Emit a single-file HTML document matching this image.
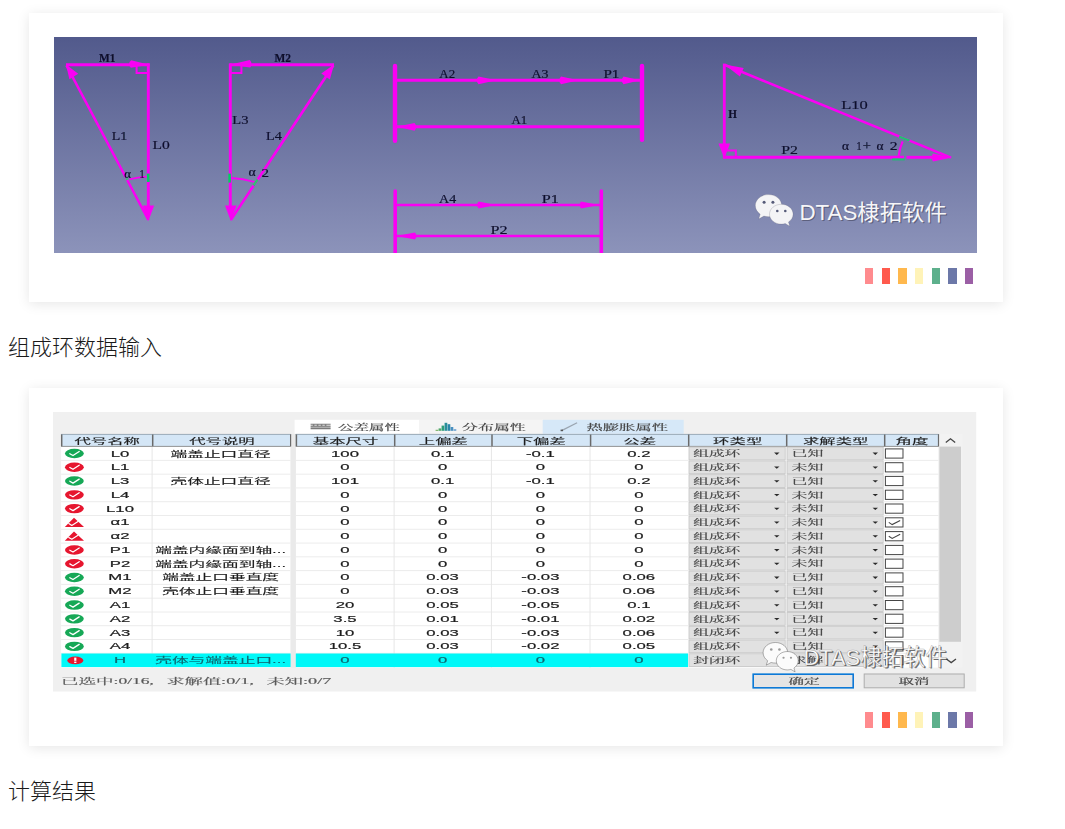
<!DOCTYPE html>
<html lang="zh-CN"><head><meta charset="utf-8"><title>组成环数据输入</title>
<style>
html,body{margin:0;padding:0;background:#fff;}
body{width:1065px;height:829px;position:relative;overflow:hidden;font-family:"Liberation Sans","Noto Sans CJK SC",sans-serif;}
.card{position:absolute;left:29px;width:974px;background:#fff;box-shadow:0 2px 12px rgba(0,0,0,.10);}
.bar{position:absolute;width:8.6px;height:16px;}
h2{position:absolute;left:8px;margin:0;font-weight:300;font-size:22px;line-height:30px;color:#1a1a1a;font-family:"Liberation Sans","Noto Sans CJK SC",sans-serif;white-space:nowrap;}
.img{position:absolute;overflow:hidden;}
</style></head><body>

<div class="card" style="top:13px;height:289px"></div>
<div class="card" style="top:388px;height:358px"></div>
<div class="bar" style="left:864.8px;top:268px;background:#ff8b8e"></div><div class="bar" style="left:881.5px;top:268px;background:#ff5a4d"></div><div class="bar" style="left:898.1px;top:268px;background:#ffb84d"></div><div class="bar" style="left:914.8px;top:268px;background:#fff3b8"></div><div class="bar" style="left:931.5px;top:268px;background:#5db08c"></div><div class="bar" style="left:948.1px;top:268px;background:#6c78a8"></div><div class="bar" style="left:964.8px;top:268px;background:#9b5fa5"></div>
<div class="bar" style="left:864.8px;top:712px;background:#ff8b8e"></div><div class="bar" style="left:881.5px;top:712px;background:#ff5a4d"></div><div class="bar" style="left:898.1px;top:712px;background:#ffb84d"></div><div class="bar" style="left:914.8px;top:712px;background:#fff3b8"></div><div class="bar" style="left:931.5px;top:712px;background:#5db08c"></div><div class="bar" style="left:948.1px;top:712px;background:#6c78a8"></div><div class="bar" style="left:964.8px;top:712px;background:#9b5fa5"></div>
<h2 style="top:333px">组成环数据输入</h2>
<h2 style="top:777px">计算结果</h2>
<svg class="img" style="left:54px;top:37px" width="923" height="216" viewBox="54 37 923 216">
<defs><linearGradient id="bg1" x1="0" y1="0" x2="0" y2="1"><stop offset="0" stop-color="#525a8c"/><stop offset="1" stop-color="#8c93ba"/></linearGradient><filter id="soft" x="-5%" y="-5%" width="110%" height="110%"><feGaussianBlur stdDeviation="0.55"/></filter></defs>
<rect x="54" y="37" width="923" height="216" fill="url(#bg1)"/>
<g filter="url(#soft)">
<line x1="66" y1="64.8" x2="149.6" y2="64.8" stroke="#fa04f4" stroke-width="2.9" stroke-linecap="butt"/>
<line x1="148.3" y1="63.5" x2="148.3" y2="208" stroke="#fa04f4" stroke-width="2.9" stroke-linecap="butt"/>
<line x1="66.5" y1="65.5" x2="148.4" y2="220" stroke="#fa04f4" stroke-width="2.6" stroke-linecap="butt"/>
<path d="M148.4 221.0 L142.6 205.6 Q148.4 205.6 154.2 205.6 Z" fill="#fa04f4"/>
<path d="M149.0 64.8 L130.8 67.8 Q127.0 63.8 131.2 60.2 Z" fill="#fa04f4"/>
<path d="M66.0 64.5 L78.2 73.7 Q73.8 76.5 69.4 79.3 Z" fill="#fa04f4"/>
<path d="M136.6 65 V73 H148" fill="none" stroke="#fa04f4" stroke-width="2"/>
<path d="M129.3 179.3 Q138 177.2 146.6 176.6" fill="none" stroke="#fa04f4" stroke-width="1.8"/>
<line x1="148.3" y1="173.6" x2="148.3" y2="182" stroke="#00d060" stroke-width="2.6" stroke-linecap="butt"/>
<line x1="126.0" y1="177.0" x2="127.4" y2="180.0" stroke="#30c070" stroke-width="2.2" stroke-linecap="butt"/>
<line x1="229.5" y1="64.8" x2="334" y2="64.8" stroke="#fa04f4" stroke-width="2.9" stroke-linecap="butt"/>
<line x1="230.3" y1="63.5" x2="230.3" y2="208" stroke="#fa04f4" stroke-width="2.9" stroke-linecap="butt"/>
<line x1="230.8" y1="220" x2="333.3" y2="65.5" stroke="#fa04f4" stroke-width="2.6" stroke-linecap="butt"/>
<path d="M230.8 221.0 L225.0 205.6 Q230.8 205.6 236.6 205.6 Z" fill="#fa04f4"/>
<path d="M230.0 64.8 L249.8 60.0 Q253.0 63.7 250.2 67.6 Z" fill="#fa04f4"/>
<path d="M334.0 64.5 L329.9 79.5 Q325.6 76.5 321.3 73.5 Z" fill="#fa04f4"/>
<path d="M231 73 H241.4 V65" fill="none" stroke="#fa04f4" stroke-width="2"/>
<path d="M231 178 Q243 178.4 254.6 182" fill="none" stroke="#fa04f4" stroke-width="1.8"/>
<line x1="229.6" y1="173.6" x2="229.6" y2="182.6" stroke="#00d060" stroke-width="2.6" stroke-linecap="butt"/>
<line x1="253.6" y1="185.5" x2="257.6" y2="179.5" stroke="#30c070" stroke-width="2.4" stroke-linecap="butt"/>
<line x1="395" y1="65.9" x2="395" y2="140.7" stroke="#fa04f4" stroke-width="4.4" stroke-linecap="round"/>
<line x1="642" y1="65.9" x2="642" y2="139.8" stroke="#fa04f4" stroke-width="4.4" stroke-linecap="round"/>
<line x1="395" y1="80.3" x2="642" y2="80.3" stroke="#fa04f4" stroke-width="2.9" stroke-linecap="butt"/>
<line x1="395" y1="126.8" x2="642" y2="126.8" stroke="#fa04f4" stroke-width="2.9" stroke-linecap="butt"/>
<path d="M496.0 80.3 L478.5 84.2 Q475.0 80.3 478.5 76.4 Z" fill="#fa04f4"/>
<path d="M578.4 80.3 L561.0 84.2 Q557.5 80.3 561.0 76.4 Z" fill="#fa04f4"/>
<path d="M640.0 80.3 L623.5 84.2 Q620.0 80.3 623.5 76.4 Z" fill="#fa04f4"/>
<path d="M397.0 126.8 L414.5 122.9 Q418.0 126.8 414.5 130.7 Z" fill="#fa04f4"/>
<line x1="395.2" y1="191" x2="395.2" y2="256" stroke="#fa04f4" stroke-width="3.6" stroke-linecap="round"/>
<line x1="601.3" y1="191" x2="601.3" y2="256" stroke="#fa04f4" stroke-width="3.6" stroke-linecap="round"/>
<line x1="395" y1="205" x2="601" y2="205" stroke="#fa04f4" stroke-width="2.4" stroke-linecap="butt"/>
<line x1="395" y1="236" x2="601" y2="236" stroke="#fa04f4" stroke-width="2.4" stroke-linecap="butt"/>
<path d="M496.0 205.0 L478.5 208.4 Q475.5 205.0 478.5 201.6 Z" fill="#fa04f4"/>
<path d="M599.0 205.0 L581.0 208.4 Q578.0 205.0 581.0 201.6 Z" fill="#fa04f4"/>
<path d="M396.5 236.0 L415.0 232.6 Q418.0 236.0 415.0 239.4 Z" fill="#fa04f4"/>
<line x1="724.3" y1="63.6" x2="724.3" y2="158.4" stroke="#fa04f4" stroke-width="2.8" stroke-linecap="butt"/>
<line x1="723" y1="157.3" x2="904" y2="157.3" stroke="#fa04f4" stroke-width="2.9" stroke-linecap="butt"/>
<line x1="906.5" y1="157.3" x2="935" y2="157.3" stroke="#fa04f4" stroke-width="2.9" stroke-linecap="butt"/>
<line x1="725" y1="65" x2="951" y2="157.6" stroke="#fa04f4" stroke-width="2.6" stroke-linecap="butt"/>
<path d="M724.3 158.5 L718.5 143.6 Q724.3 143.6 730.1 143.6 Z" fill="#fa04f4"/>
<path d="M724.5 64.6 L743.7 68.0 Q741.8 72.2 739.9 76.4 Z" fill="#fa04f4"/>
<path d="M952.0 157.5 L933.0 161.5 Q930.5 157.5 933.0 153.5 Z" fill="#fa04f4"/>
<path d="M725 150.6 H735.8 V157" fill="none" stroke="#fa04f4" stroke-width="2"/>
<path d="M902.6 141.4 Q899.4 149 898.6 156.6" fill="none" stroke="#fa04f4" stroke-width="2.2"/>
<line x1="899.2" y1="136.6" x2="909.6" y2="140.6" stroke="#20c070" stroke-width="2.2" stroke-linecap="butt"/>
<line x1="892.2" y1="159.4" x2="904.8" y2="159.4" stroke="#20c070" stroke-width="2.0" stroke-linecap="butt"/>
</g>
<g font-family="'Liberation Serif',serif" fill="#0d0e2c" stroke="#0d0e2c" stroke-width="0.18" filter="url(#soft)">
<text x="99" y="61.8" font-size="13" font-weight="bold" textLength="16.6" lengthAdjust="spacingAndGlyphs">M1</text>
<text x="111.8" y="139.8" font-size="13" font-weight="normal" textLength="15.5" lengthAdjust="spacingAndGlyphs">L1</text>
<text x="152.4" y="148.8" font-size="13" font-weight="normal" textLength="17.3" lengthAdjust="spacingAndGlyphs">L0</text>
<text x="274.4" y="61.8" font-size="13" font-weight="bold" textLength="16.5" lengthAdjust="spacingAndGlyphs">M2</text>
<text x="232.3" y="124.1" font-size="13" font-weight="normal" textLength="16.1" lengthAdjust="spacingAndGlyphs">L3</text>
<text x="266.1" y="140.2" font-size="13" font-weight="normal" textLength="15.8" lengthAdjust="spacingAndGlyphs">L4</text>
<text x="439.3" y="77.6" font-size="13" font-weight="normal" textLength="15.8" lengthAdjust="spacingAndGlyphs">A2</text>
<text x="511.5" y="124.4" font-size="13" font-weight="normal" textLength="15.7" lengthAdjust="spacingAndGlyphs">A1</text>
<text x="531.5" y="77.6" font-size="13" font-weight="normal" textLength="16.9" lengthAdjust="spacingAndGlyphs">A3</text>
<text x="603.4" y="77.6" font-size="13" font-weight="normal" textLength="16.0" lengthAdjust="spacingAndGlyphs">P1</text>
<text x="439.1" y="202.6" font-size="13" font-weight="normal" textLength="17.1" lengthAdjust="spacingAndGlyphs">A4</text>
<text x="541.7" y="202.6" font-size="13" font-weight="normal" textLength="17.1" lengthAdjust="spacingAndGlyphs">P1</text>
<text x="490.4" y="233.9" font-size="13" font-weight="normal" textLength="17.1" lengthAdjust="spacingAndGlyphs">P2</text>
<text x="781.3" y="153.5" font-size="13" font-weight="normal" textLength="16.7" lengthAdjust="spacingAndGlyphs">P2</text>
<text x="841.2" y="109" font-size="13" font-weight="normal" textLength="26.6" lengthAdjust="spacingAndGlyphs">L10</text>
<text x="728.2" y="117.9" font-size="13" font-weight="bold" textLength="8.7" lengthAdjust="spacingAndGlyphs">H</text>
<text x="124.3" y="177.6" font-size="12" font-weight="normal" textLength="6.7" lengthAdjust="spacingAndGlyphs">α</text>
<text x="139.6" y="178" font-size="13" font-weight="normal" textLength="5.2" lengthAdjust="spacingAndGlyphs">1</text>
<text x="248.4" y="176.4" font-size="12" font-weight="normal" textLength="7.2" lengthAdjust="spacingAndGlyphs">α</text>
<text x="261.6" y="176.6" font-size="13" font-weight="normal" textLength="7.5" lengthAdjust="spacingAndGlyphs">2</text>
<text x="842" y="149.6" font-size="12" font-weight="normal" textLength="7.0" lengthAdjust="spacingAndGlyphs">α</text>
<text x="856.5" y="149.8" font-size="13" font-weight="normal" textLength="5.1" lengthAdjust="spacingAndGlyphs">1</text>
<text x="862.8" y="149.8" font-size="13" font-weight="normal" textLength="8.2" lengthAdjust="spacingAndGlyphs">+</text>
<text x="876.5" y="149.6" font-size="12" font-weight="normal" textLength="7.0" lengthAdjust="spacingAndGlyphs">α</text>
<text x="889.8" y="149.8" font-size="13" font-weight="normal" textLength="7.8" lengthAdjust="spacingAndGlyphs">2</text>
</g>
<g transform="translate(755.3,194.6) scale(1.0)">
<g fill="#f4f4f6" stroke="rgba(70,70,90,.35)" stroke-width="0.6">
<path d="M13.2 0 C5.9 0 0 4.9 0 11 C0 14.5 1.9 17.5 4.9 19.6 L3.4 24.4 L8.6 21.5 C10 21.9 11.6 22.1 13.2 22.1 C20.5 22.1 26.4 17.2 26.4 11 C26.4 4.9 20.5 0 13.2 0 Z"/>
<path d="M26 9.7 C19.5 9.7 14.2 14.1 14.2 19.6 C14.2 25.1 19.5 29.5 26 29.5 C27.4 29.5 28.7 29.3 29.9 28.9 L34.4 31.6 L33.2 27.4 C36 25.6 37.8 22.8 37.8 19.6 C37.8 14.1 32.5 9.7 26 9.7 Z"/>
</g>
<g fill="#555a78"><circle cx="8.8" cy="7.6" r="1.5"/><circle cx="17.6" cy="7.6" r="1.5"/><circle cx="22" cy="16.4" r="1.3"/><circle cx="30" cy="16.4" r="1.3"/></g>
</g>
<g font-family="'Liberation Sans','Noto Sans CJK SC',sans-serif" font-size="22"><text x="800.6" y="221.39999999999998" fill="rgba(60,60,80,.55)" textLength="147.4" lengthAdjust="spacingAndGlyphs">DTAS棣拓软件</text><text x="799.4" y="220.2" fill="#f6f6f8" textLength="147.4" lengthAdjust="spacingAndGlyphs">DTAS棣拓软件</text></g>
</svg>
<svg class="img" style="left:53.4px;top:412.0px" width="923.2" height="279.5" viewBox="53.4 412.0 923.2 279.5">
<defs><filter id="soft2" x="-2%" y="-2%" width="104%" height="104%"><feGaussianBlur stdDeviation="0.45"/></filter></defs>
<rect x="53.4" y="412.0" width="923.2" height="279.5" fill="#f0f0f0"/>
<g filter="url(#soft2)">
<rect x="295.0" y="419.8" width="124.7" height="14.0" fill="#ffffff"/>
<rect x="419.7" y="419.8" width="123.4" height="14.0" fill="#f4f4f4"/>
<rect x="543.1" y="419.8" width="141.0" height="14.0" fill="#d6e8f8"/>
<g stroke="#7a7a7a" stroke-width="1.1" fill="none"><path d="M311 424.2 H331 M311 428.6 H331"/><path d="M314 424.2 V426 M318 424.2 V426 M322 424.2 V426 M326 424.2 V426" stroke-width="1.6"/><path d="M311 426.6 H331" stroke-width="2.2" stroke="#8c8c8c"/></g>
<rect x="436.0" y="429.8" width="2.7" height="1.0" fill="#6aa84f"/>
<rect x="439.0" y="428.4" width="2.7" height="2.4" fill="#4fa86a"/>
<rect x="442.0" y="425.6" width="2.7" height="5.2" fill="#2e9e7a"/>
<rect x="445.0" y="422.8" width="2.7" height="8.0" fill="#2a8f9a"/>
<rect x="448.0" y="424.2" width="2.7" height="6.6" fill="#2a86a8"/>
<rect x="451.0" y="427.0" width="2.7" height="3.8" fill="#4a90c0"/>
<rect x="454.0" y="429.2" width="2.7" height="1.6" fill="#6aa0d0"/>
<path d="M562.5 430.4 L577.5 422.8" stroke="#9aa4b0" stroke-width="1.2" fill="none"/><rect x="561" y="429.6" width="2.4" height="1.6" fill="#555"/>
<text x="338.5" y="430.4" font-family="'Liberation Serif','Noto Serif CJK SC',serif" font-size="8.0" fill="#444444" stroke="#444444" stroke-width="0.15" textLength="61.9" lengthAdjust="spacingAndGlyphs">公差属性</text>
<text x="462.5" y="430.4" font-family="'Liberation Serif','Noto Serif CJK SC',serif" font-size="8.0" fill="#444444" stroke="#444444" stroke-width="0.15" textLength="63.7" lengthAdjust="spacingAndGlyphs">分布属性</text>
<text x="587.0" y="430.4" font-family="'Liberation Serif','Noto Serif CJK SC',serif" font-size="8.0" fill="#444444" stroke="#444444" stroke-width="0.15" textLength="81.4" lengthAdjust="spacingAndGlyphs">热膨胀属性</text>
<rect x="61.5" y="446.4" width="229.5" height="221.2" fill="#ffffff"/>
<rect x="296.2" y="446.4" width="642.7" height="221.2" fill="#ffffff"/>
<rect x="291.0" y="434.0" width="5.2" height="233.6" fill="#eaeaea"/>
<rect x="938.9" y="434.0" width="23.9" height="233.6" fill="#f2f2f2"/>
<rect x="939.8" y="446.6" width="21.6" height="195.2" fill="#cdcdcd"/>
<path d="M946.2 442.4 L950.9 438.8 L955.6 442.4" fill="none" stroke="#444" stroke-width="1.3"/>
<path d="M946.8 659 L951.6 662.6 L956.4 659" fill="none" stroke="#444" stroke-width="1.3"/>
<path d="M61.5 460.4 H291 M296.2 460.4 H688.5 M884.5 460.4 H938.9" stroke="#ececec" stroke-width="1"/>
<path d="M61.5 474.2 H291 M296.2 474.2 H688.5 M884.5 474.2 H938.9" stroke="#ececec" stroke-width="1"/>
<path d="M61.5 487.9 H291 M296.2 487.9 H688.5 M884.5 487.9 H938.9" stroke="#ececec" stroke-width="1"/>
<path d="M61.5 501.7 H291 M296.2 501.7 H688.5 M884.5 501.7 H938.9" stroke="#ececec" stroke-width="1"/>
<path d="M61.5 515.5 H291 M296.2 515.5 H688.5 M884.5 515.5 H938.9" stroke="#ececec" stroke-width="1"/>
<path d="M61.5 529.3 H291 M296.2 529.3 H688.5 M884.5 529.3 H938.9" stroke="#ececec" stroke-width="1"/>
<path d="M61.5 543.1 H291 M296.2 543.1 H688.5 M884.5 543.1 H938.9" stroke="#ececec" stroke-width="1"/>
<path d="M61.5 556.8 H291 M296.2 556.8 H688.5 M884.5 556.8 H938.9" stroke="#ececec" stroke-width="1"/>
<path d="M61.5 570.6 H291 M296.2 570.6 H688.5 M884.5 570.6 H938.9" stroke="#ececec" stroke-width="1"/>
<path d="M61.5 584.4 H291 M296.2 584.4 H688.5 M884.5 584.4 H938.9" stroke="#ececec" stroke-width="1"/>
<path d="M61.5 598.2 H291 M296.2 598.2 H688.5 M884.5 598.2 H938.9" stroke="#ececec" stroke-width="1"/>
<path d="M61.5 612.0 H291 M296.2 612.0 H688.5 M884.5 612.0 H938.9" stroke="#ececec" stroke-width="1"/>
<path d="M61.5 625.7 H291 M296.2 625.7 H688.5 M884.5 625.7 H938.9" stroke="#ececec" stroke-width="1"/>
<path d="M61.5 639.5 H291 M296.2 639.5 H688.5 M884.5 639.5 H938.9" stroke="#ececec" stroke-width="1"/>
<path d="M61.5 653.3 H291 M296.2 653.3 H688.5 M884.5 653.3 H938.9" stroke="#ececec" stroke-width="1"/>
<path d="M152.5 446.4 V667.6" stroke="#e6e6e6" stroke-width="1"/>
<path d="M394.5 446.4 V667.6" stroke="#e6e6e6" stroke-width="1"/>
<path d="M491.8 446.4 V667.6" stroke="#e6e6e6" stroke-width="1"/>
<path d="M590.4 446.4 V667.6" stroke="#e6e6e6" stroke-width="1"/>
<rect x="61.8" y="653.5" width="229.2" height="13.6" fill="#00f8f8"/>
<rect x="296.2" y="653.5" width="392.3" height="13.6" fill="#00f8f8"/>
<rect x="61.5" y="434.2" width="91.0" height="12.2" fill="#d4e6f6"/>
<rect x="152.5" y="434.2" width="138.5" height="12.2" fill="#d4e6f6"/>
<rect x="296.2" y="434.2" width="98.3" height="12.2" fill="#d4e6f6"/>
<rect x="394.5" y="434.2" width="97.3" height="12.2" fill="#d4e6f6"/>
<rect x="491.8" y="434.2" width="98.6" height="12.2" fill="#d4e6f6"/>
<rect x="590.4" y="434.2" width="98.1" height="12.2" fill="#d4e6f6"/>
<rect x="688.5" y="434.2" width="98.0" height="12.2" fill="#d4e6f6"/>
<rect x="786.5" y="434.2" width="98.0" height="12.2" fill="#d4e6f6"/>
<rect x="884.5" y="434.2" width="54.4" height="12.2" fill="#d4e6f6"/>
<path d="M62.1 434 V446.4" stroke="#6a6a6a" stroke-width="1.5"/>
<path d="M153.1 434 V446.4" stroke="#6a6a6a" stroke-width="1.5"/>
<path d="M296.8 434 V446.4" stroke="#6a6a6a" stroke-width="1.5"/>
<path d="M395.1 434 V446.4" stroke="#6a6a6a" stroke-width="1.5"/>
<path d="M492.4 434 V446.4" stroke="#6a6a6a" stroke-width="1.5"/>
<path d="M591.0 434 V446.4" stroke="#6a6a6a" stroke-width="1.5"/>
<path d="M689.1 434 V446.4" stroke="#6a6a6a" stroke-width="1.5"/>
<path d="M787.1 434 V446.4" stroke="#6a6a6a" stroke-width="1.5"/>
<path d="M885.1 434 V446.4" stroke="#6a6a6a" stroke-width="1.5"/>
<path d="M291 434 V446.4 M938.9 434 V446.4" stroke="#6a6a6a" stroke-width="1.2"/>
<path d="M61.5 434.4 H291 M296.2 434.4 H938.9" stroke="#8a9aa8" stroke-width="0.8"/>
<path d="M61.5 446.4 H291 M296.2 446.4 H938.9" stroke="#8a8a8a" stroke-width="0.9"/>
<text transform="translate(107.6 443.5) scale(2.05 1)" font-family="'Liberation Sans','Noto Sans CJK SC',sans-serif" font-size="8.0" text-anchor="middle" fill="#1c1c1c" stroke="#1c1c1c" stroke-width="0.12">代号名称</text>
<text transform="translate(222.3 443.5) scale(2.05 1)" font-family="'Liberation Sans','Noto Sans CJK SC',sans-serif" font-size="8.0" text-anchor="middle" fill="#1c1c1c" stroke="#1c1c1c" stroke-width="0.12">代号说明</text>
<text transform="translate(346.0 443.5) scale(2.05 1)" font-family="'Liberation Sans','Noto Sans CJK SC',sans-serif" font-size="8.0" text-anchor="middle" fill="#1c1c1c" stroke="#1c1c1c" stroke-width="0.12">基本尺寸</text>
<text transform="translate(443.8 443.5) scale(2.05 1)" font-family="'Liberation Sans','Noto Sans CJK SC',sans-serif" font-size="8.0" text-anchor="middle" fill="#1c1c1c" stroke="#1c1c1c" stroke-width="0.12">上偏差</text>
<text transform="translate(541.7 443.5) scale(2.05 1)" font-family="'Liberation Sans','Noto Sans CJK SC',sans-serif" font-size="8.0" text-anchor="middle" fill="#1c1c1c" stroke="#1c1c1c" stroke-width="0.12">下偏差</text>
<text transform="translate(640.1 443.5) scale(2.05 1)" font-family="'Liberation Sans','Noto Sans CJK SC',sans-serif" font-size="8.0" text-anchor="middle" fill="#1c1c1c" stroke="#1c1c1c" stroke-width="0.12">公差</text>
<text transform="translate(738.1 443.5) scale(2.05 1)" font-family="'Liberation Sans','Noto Sans CJK SC',sans-serif" font-size="8.0" text-anchor="middle" fill="#1c1c1c" stroke="#1c1c1c" stroke-width="0.12">环类型</text>
<text transform="translate(836.1 443.5) scale(2.05 1)" font-family="'Liberation Sans','Noto Sans CJK SC',sans-serif" font-size="8.0" text-anchor="middle" fill="#1c1c1c" stroke="#1c1c1c" stroke-width="0.12">求解类型</text>
<text transform="translate(912.3 443.5) scale(2.05 1)" font-family="'Liberation Sans','Noto Sans CJK SC',sans-serif" font-size="8.0" text-anchor="middle" fill="#1c1c1c" stroke="#1c1c1c" stroke-width="0.12">角度</text>
<ellipse cx="74.8" cy="453.49" rx="9.4" ry="4.7" fill="#16a857"/><path d="M70.2 453.7 L73.4 455.5 L79.6 451.5" fill="none" stroke="#fff" stroke-width="1.3" stroke-linecap="round" stroke-linejoin="round"/>
<text transform="translate(120.4 456.5) scale(1.8 1)" font-family="'Liberation Sans','Noto Sans CJK SC',sans-serif" font-size="9.3" text-anchor="middle" fill="#1c1c1c" stroke="#1c1c1c" stroke-width="0.2">L0</text>
<text transform="translate(221.0 456.5) scale(1.99 1)" font-family="'Liberation Sans','Noto Sans CJK SC',sans-serif" font-size="8.4" text-anchor="middle" fill="#1c1c1c" stroke="#1c1c1c" stroke-width="0.1">端盖止口直径</text>
<text transform="translate(345.4 456.5) scale(1.8 1)" font-family="'Liberation Sans','Noto Sans CJK SC',sans-serif" font-size="9.3" text-anchor="middle" fill="#1c1c1c" stroke="#1c1c1c" stroke-width="0.2">100</text>
<text transform="translate(443.0 456.5) scale(1.8 1)" font-family="'Liberation Sans','Noto Sans CJK SC',sans-serif" font-size="9.3" text-anchor="middle" fill="#1c1c1c" stroke="#1c1c1c" stroke-width="0.2">0.1</text>
<text transform="translate(540.8 456.5) scale(1.8 1)" font-family="'Liberation Sans','Noto Sans CJK SC',sans-serif" font-size="9.3" text-anchor="middle" fill="#1c1c1c" stroke="#1c1c1c" stroke-width="0.2">-0.1</text>
<text transform="translate(639.3 456.5) scale(1.8 1)" font-family="'Liberation Sans','Noto Sans CJK SC',sans-serif" font-size="9.3" text-anchor="middle" fill="#1c1c1c" stroke="#1c1c1c" stroke-width="0.2">0.2</text>
<rect x="689.4" y="447.1" width="96.2" height="12.8" fill="#e1e1e1" stroke="#c4c4c4" stroke-width="0.8"/>
<rect x="787.4" y="447.1" width="96.2" height="12.8" fill="#e1e1e1" stroke="#c4c4c4" stroke-width="0.8"/>
<text x="693.6" y="456.3" font-family="'Liberation Serif','Noto Serif CJK SC',serif" font-size="8.0" fill="#444444" stroke="#444444" stroke-width="0.15" textLength="47.2" lengthAdjust="spacingAndGlyphs">组成环</text>
<text x="792.0" y="456.3" font-family="'Liberation Serif','Noto Serif CJK SC',serif" font-size="8.0" fill="#444444" stroke="#444444" stroke-width="0.15" textLength="31.8" lengthAdjust="spacingAndGlyphs">已知</text>
<path d="M774.5 452.6 H779.9 L777.2 454.9 Z" fill="#2a2a2a"/>
<path d="M873.0 452.6 H878.4 L875.7 454.9 Z" fill="#2a2a2a"/>
<rect x="885.8" y="448.9" width="17.6" height="9.2" fill="#ffffff" stroke="#444" stroke-width="1.0"/>
<ellipse cx="74.8" cy="467.27000000000004" rx="9.4" ry="4.7" fill="#e6122e"/><path d="M70.2 467.5 L73.4 469.3 L79.6 465.3" fill="none" stroke="#fff" stroke-width="1.3" stroke-linecap="round" stroke-linejoin="round"/>
<text transform="translate(120.4 470.3) scale(1.8 1)" font-family="'Liberation Sans','Noto Sans CJK SC',sans-serif" font-size="9.3" text-anchor="middle" fill="#1c1c1c" stroke="#1c1c1c" stroke-width="0.2">L1</text>
<text transform="translate(345.4 470.3) scale(1.8 1)" font-family="'Liberation Sans','Noto Sans CJK SC',sans-serif" font-size="9.3" text-anchor="middle" fill="#1c1c1c" stroke="#1c1c1c" stroke-width="0.2">0</text>
<text transform="translate(443.0 470.3) scale(1.8 1)" font-family="'Liberation Sans','Noto Sans CJK SC',sans-serif" font-size="9.3" text-anchor="middle" fill="#1c1c1c" stroke="#1c1c1c" stroke-width="0.2">0</text>
<text transform="translate(540.8 470.3) scale(1.8 1)" font-family="'Liberation Sans','Noto Sans CJK SC',sans-serif" font-size="9.3" text-anchor="middle" fill="#1c1c1c" stroke="#1c1c1c" stroke-width="0.2">0</text>
<text transform="translate(639.3 470.3) scale(1.8 1)" font-family="'Liberation Sans','Noto Sans CJK SC',sans-serif" font-size="9.3" text-anchor="middle" fill="#1c1c1c" stroke="#1c1c1c" stroke-width="0.2">0</text>
<rect x="689.4" y="460.9" width="96.2" height="12.8" fill="#e1e1e1" stroke="#c4c4c4" stroke-width="0.8"/>
<rect x="787.4" y="460.9" width="96.2" height="12.8" fill="#e1e1e1" stroke="#c4c4c4" stroke-width="0.8"/>
<text x="693.6" y="470.1" font-family="'Liberation Serif','Noto Serif CJK SC',serif" font-size="8.0" fill="#444444" stroke="#444444" stroke-width="0.15" textLength="47.2" lengthAdjust="spacingAndGlyphs">组成环</text>
<text x="792.0" y="470.1" font-family="'Liberation Serif','Noto Serif CJK SC',serif" font-size="8.0" fill="#444444" stroke="#444444" stroke-width="0.15" textLength="31.8" lengthAdjust="spacingAndGlyphs">未知</text>
<path d="M774.5 466.4 H779.9 L777.2 468.7 Z" fill="#2a2a2a"/>
<path d="M873.0 466.4 H878.4 L875.7 468.7 Z" fill="#2a2a2a"/>
<rect x="885.8" y="462.7" width="17.6" height="9.2" fill="#ffffff" stroke="#444" stroke-width="1.0"/>
<ellipse cx="74.8" cy="481.05" rx="9.4" ry="4.7" fill="#16a857"/><path d="M70.2 481.2 L73.4 483.1 L79.6 479.1" fill="none" stroke="#fff" stroke-width="1.3" stroke-linecap="round" stroke-linejoin="round"/>
<text transform="translate(120.4 484.1) scale(1.8 1)" font-family="'Liberation Sans','Noto Sans CJK SC',sans-serif" font-size="9.3" text-anchor="middle" fill="#1c1c1c" stroke="#1c1c1c" stroke-width="0.2">L3</text>
<text transform="translate(221.0 484.1) scale(1.99 1)" font-family="'Liberation Sans','Noto Sans CJK SC',sans-serif" font-size="8.4" text-anchor="middle" fill="#1c1c1c" stroke="#1c1c1c" stroke-width="0.1">壳体止口直径</text>
<text transform="translate(345.4 484.1) scale(1.8 1)" font-family="'Liberation Sans','Noto Sans CJK SC',sans-serif" font-size="9.3" text-anchor="middle" fill="#1c1c1c" stroke="#1c1c1c" stroke-width="0.2">101</text>
<text transform="translate(443.0 484.1) scale(1.8 1)" font-family="'Liberation Sans','Noto Sans CJK SC',sans-serif" font-size="9.3" text-anchor="middle" fill="#1c1c1c" stroke="#1c1c1c" stroke-width="0.2">0.1</text>
<text transform="translate(540.8 484.1) scale(1.8 1)" font-family="'Liberation Sans','Noto Sans CJK SC',sans-serif" font-size="9.3" text-anchor="middle" fill="#1c1c1c" stroke="#1c1c1c" stroke-width="0.2">-0.1</text>
<text transform="translate(639.3 484.1) scale(1.8 1)" font-family="'Liberation Sans','Noto Sans CJK SC',sans-serif" font-size="9.3" text-anchor="middle" fill="#1c1c1c" stroke="#1c1c1c" stroke-width="0.2">0.2</text>
<rect x="689.4" y="474.7" width="96.2" height="12.8" fill="#e1e1e1" stroke="#c4c4c4" stroke-width="0.8"/>
<rect x="787.4" y="474.7" width="96.2" height="12.8" fill="#e1e1e1" stroke="#c4c4c4" stroke-width="0.8"/>
<text x="693.6" y="483.9" font-family="'Liberation Serif','Noto Serif CJK SC',serif" font-size="8.0" fill="#444444" stroke="#444444" stroke-width="0.15" textLength="47.2" lengthAdjust="spacingAndGlyphs">组成环</text>
<text x="792.0" y="483.9" font-family="'Liberation Serif','Noto Serif CJK SC',serif" font-size="8.0" fill="#444444" stroke="#444444" stroke-width="0.15" textLength="31.8" lengthAdjust="spacingAndGlyphs">已知</text>
<path d="M774.5 480.2 H779.9 L777.2 482.4 Z" fill="#2a2a2a"/>
<path d="M873.0 480.2 H878.4 L875.7 482.4 Z" fill="#2a2a2a"/>
<rect x="885.8" y="476.4" width="17.6" height="9.2" fill="#ffffff" stroke="#444" stroke-width="1.0"/>
<ellipse cx="74.8" cy="494.83000000000004" rx="9.4" ry="4.7" fill="#e6122e"/><path d="M70.2 495.0 L73.4 496.8 L79.6 492.8" fill="none" stroke="#fff" stroke-width="1.3" stroke-linecap="round" stroke-linejoin="round"/>
<text transform="translate(120.4 497.8) scale(1.8 1)" font-family="'Liberation Sans','Noto Sans CJK SC',sans-serif" font-size="9.3" text-anchor="middle" fill="#1c1c1c" stroke="#1c1c1c" stroke-width="0.2">L4</text>
<text transform="translate(345.4 497.8) scale(1.8 1)" font-family="'Liberation Sans','Noto Sans CJK SC',sans-serif" font-size="9.3" text-anchor="middle" fill="#1c1c1c" stroke="#1c1c1c" stroke-width="0.2">0</text>
<text transform="translate(443.0 497.8) scale(1.8 1)" font-family="'Liberation Sans','Noto Sans CJK SC',sans-serif" font-size="9.3" text-anchor="middle" fill="#1c1c1c" stroke="#1c1c1c" stroke-width="0.2">0</text>
<text transform="translate(540.8 497.8) scale(1.8 1)" font-family="'Liberation Sans','Noto Sans CJK SC',sans-serif" font-size="9.3" text-anchor="middle" fill="#1c1c1c" stroke="#1c1c1c" stroke-width="0.2">0</text>
<text transform="translate(639.3 497.8) scale(1.8 1)" font-family="'Liberation Sans','Noto Sans CJK SC',sans-serif" font-size="9.3" text-anchor="middle" fill="#1c1c1c" stroke="#1c1c1c" stroke-width="0.2">0</text>
<rect x="689.4" y="488.4" width="96.2" height="12.8" fill="#e1e1e1" stroke="#c4c4c4" stroke-width="0.8"/>
<rect x="787.4" y="488.4" width="96.2" height="12.8" fill="#e1e1e1" stroke="#c4c4c4" stroke-width="0.8"/>
<text x="693.6" y="497.6" font-family="'Liberation Serif','Noto Serif CJK SC',serif" font-size="8.0" fill="#444444" stroke="#444444" stroke-width="0.15" textLength="47.2" lengthAdjust="spacingAndGlyphs">组成环</text>
<text x="792.0" y="497.6" font-family="'Liberation Serif','Noto Serif CJK SC',serif" font-size="8.0" fill="#444444" stroke="#444444" stroke-width="0.15" textLength="31.8" lengthAdjust="spacingAndGlyphs">未知</text>
<path d="M774.5 493.9 H779.9 L777.2 496.2 Z" fill="#2a2a2a"/>
<path d="M873.0 493.9 H878.4 L875.7 496.2 Z" fill="#2a2a2a"/>
<rect x="885.8" y="490.2" width="17.6" height="9.2" fill="#ffffff" stroke="#444" stroke-width="1.0"/>
<ellipse cx="74.8" cy="508.61" rx="9.4" ry="4.7" fill="#e6122e"/><path d="M70.2 508.8 L73.4 510.6 L79.6 506.6" fill="none" stroke="#fff" stroke-width="1.3" stroke-linecap="round" stroke-linejoin="round"/>
<text transform="translate(120.4 511.6) scale(1.8 1)" font-family="'Liberation Sans','Noto Sans CJK SC',sans-serif" font-size="9.3" text-anchor="middle" fill="#1c1c1c" stroke="#1c1c1c" stroke-width="0.2">L10</text>
<text transform="translate(345.4 511.6) scale(1.8 1)" font-family="'Liberation Sans','Noto Sans CJK SC',sans-serif" font-size="9.3" text-anchor="middle" fill="#1c1c1c" stroke="#1c1c1c" stroke-width="0.2">0</text>
<text transform="translate(443.0 511.6) scale(1.8 1)" font-family="'Liberation Sans','Noto Sans CJK SC',sans-serif" font-size="9.3" text-anchor="middle" fill="#1c1c1c" stroke="#1c1c1c" stroke-width="0.2">0</text>
<text transform="translate(540.8 511.6) scale(1.8 1)" font-family="'Liberation Sans','Noto Sans CJK SC',sans-serif" font-size="9.3" text-anchor="middle" fill="#1c1c1c" stroke="#1c1c1c" stroke-width="0.2">0</text>
<text transform="translate(639.3 511.6) scale(1.8 1)" font-family="'Liberation Sans','Noto Sans CJK SC',sans-serif" font-size="9.3" text-anchor="middle" fill="#1c1c1c" stroke="#1c1c1c" stroke-width="0.2">0</text>
<rect x="689.4" y="502.2" width="96.2" height="12.8" fill="#e1e1e1" stroke="#c4c4c4" stroke-width="0.8"/>
<rect x="787.4" y="502.2" width="96.2" height="12.8" fill="#e1e1e1" stroke="#c4c4c4" stroke-width="0.8"/>
<text x="693.6" y="511.4" font-family="'Liberation Serif','Noto Serif CJK SC',serif" font-size="8.0" fill="#444444" stroke="#444444" stroke-width="0.15" textLength="47.2" lengthAdjust="spacingAndGlyphs">组成环</text>
<text x="792.0" y="511.4" font-family="'Liberation Serif','Noto Serif CJK SC',serif" font-size="8.0" fill="#444444" stroke="#444444" stroke-width="0.15" textLength="31.8" lengthAdjust="spacingAndGlyphs">未知</text>
<path d="M774.5 507.7 H779.9 L777.2 510.0 Z" fill="#2a2a2a"/>
<path d="M873.0 507.7 H878.4 L875.7 510.0 Z" fill="#2a2a2a"/>
<rect x="885.8" y="504.0" width="17.6" height="9.2" fill="#ffffff" stroke="#444" stroke-width="1.0"/>
<path d="M65.2 527.0 L74.4 517.8 L84.4 527.0 Z" fill="#e6122e"/><path d="M69.2 523.6 L72.2 525.4 L78.4 521.4" fill="none" stroke="#fff" stroke-width="1.2" stroke-linecap="round" stroke-linejoin="round"/>
<text transform="translate(120.4 525.4) scale(1.8 1)" font-family="'Liberation Sans','Noto Sans CJK SC',sans-serif" font-size="9.3" text-anchor="middle" fill="#1c1c1c" stroke="#1c1c1c" stroke-width="0.2">α1</text>
<text transform="translate(345.4 525.4) scale(1.8 1)" font-family="'Liberation Sans','Noto Sans CJK SC',sans-serif" font-size="9.3" text-anchor="middle" fill="#1c1c1c" stroke="#1c1c1c" stroke-width="0.2">0</text>
<text transform="translate(443.0 525.4) scale(1.8 1)" font-family="'Liberation Sans','Noto Sans CJK SC',sans-serif" font-size="9.3" text-anchor="middle" fill="#1c1c1c" stroke="#1c1c1c" stroke-width="0.2">0</text>
<text transform="translate(540.8 525.4) scale(1.8 1)" font-family="'Liberation Sans','Noto Sans CJK SC',sans-serif" font-size="9.3" text-anchor="middle" fill="#1c1c1c" stroke="#1c1c1c" stroke-width="0.2">0</text>
<text transform="translate(639.3 525.4) scale(1.8 1)" font-family="'Liberation Sans','Noto Sans CJK SC',sans-serif" font-size="9.3" text-anchor="middle" fill="#1c1c1c" stroke="#1c1c1c" stroke-width="0.2">0</text>
<rect x="689.4" y="516.0" width="96.2" height="12.8" fill="#e1e1e1" stroke="#c4c4c4" stroke-width="0.8"/>
<rect x="787.4" y="516.0" width="96.2" height="12.8" fill="#e1e1e1" stroke="#c4c4c4" stroke-width="0.8"/>
<text x="693.6" y="525.2" font-family="'Liberation Serif','Noto Serif CJK SC',serif" font-size="8.0" fill="#444444" stroke="#444444" stroke-width="0.15" textLength="47.2" lengthAdjust="spacingAndGlyphs">组成环</text>
<text x="792.0" y="525.2" font-family="'Liberation Serif','Noto Serif CJK SC',serif" font-size="8.0" fill="#444444" stroke="#444444" stroke-width="0.15" textLength="31.8" lengthAdjust="spacingAndGlyphs">未知</text>
<path d="M774.5 521.5 H779.9 L777.2 523.8 Z" fill="#2a2a2a"/>
<path d="M873.0 521.5 H878.4 L875.7 523.8 Z" fill="#2a2a2a"/>
<rect x="885.8" y="517.8" width="17.6" height="9.2" fill="#ffffff" stroke="#444" stroke-width="1.0"/>
<path d="M889.2 522.4 L892.6 524.6 L900.6 520.4" fill="none" stroke="#444" stroke-width="1.1"/>
<path d="M65.2 540.8 L74.4 531.6 L84.4 540.8 Z" fill="#e6122e"/><path d="M69.2 537.4 L72.2 539.2 L78.4 535.2" fill="none" stroke="#fff" stroke-width="1.2" stroke-linecap="round" stroke-linejoin="round"/>
<text transform="translate(120.4 539.2) scale(1.8 1)" font-family="'Liberation Sans','Noto Sans CJK SC',sans-serif" font-size="9.3" text-anchor="middle" fill="#1c1c1c" stroke="#1c1c1c" stroke-width="0.2">α2</text>
<text transform="translate(345.4 539.2) scale(1.8 1)" font-family="'Liberation Sans','Noto Sans CJK SC',sans-serif" font-size="9.3" text-anchor="middle" fill="#1c1c1c" stroke="#1c1c1c" stroke-width="0.2">0</text>
<text transform="translate(443.0 539.2) scale(1.8 1)" font-family="'Liberation Sans','Noto Sans CJK SC',sans-serif" font-size="9.3" text-anchor="middle" fill="#1c1c1c" stroke="#1c1c1c" stroke-width="0.2">0</text>
<text transform="translate(540.8 539.2) scale(1.8 1)" font-family="'Liberation Sans','Noto Sans CJK SC',sans-serif" font-size="9.3" text-anchor="middle" fill="#1c1c1c" stroke="#1c1c1c" stroke-width="0.2">0</text>
<text transform="translate(639.3 539.2) scale(1.8 1)" font-family="'Liberation Sans','Noto Sans CJK SC',sans-serif" font-size="9.3" text-anchor="middle" fill="#1c1c1c" stroke="#1c1c1c" stroke-width="0.2">0</text>
<rect x="689.4" y="529.8" width="96.2" height="12.8" fill="#e1e1e1" stroke="#c4c4c4" stroke-width="0.8"/>
<rect x="787.4" y="529.8" width="96.2" height="12.8" fill="#e1e1e1" stroke="#c4c4c4" stroke-width="0.8"/>
<text x="693.6" y="539.0" font-family="'Liberation Serif','Noto Serif CJK SC',serif" font-size="8.0" fill="#444444" stroke="#444444" stroke-width="0.15" textLength="47.2" lengthAdjust="spacingAndGlyphs">组成环</text>
<text x="792.0" y="539.0" font-family="'Liberation Serif','Noto Serif CJK SC',serif" font-size="8.0" fill="#444444" stroke="#444444" stroke-width="0.15" textLength="31.8" lengthAdjust="spacingAndGlyphs">未知</text>
<path d="M774.5 535.3 H779.9 L777.2 537.6 Z" fill="#2a2a2a"/>
<path d="M873.0 535.3 H878.4 L875.7 537.6 Z" fill="#2a2a2a"/>
<rect x="885.8" y="531.6" width="17.6" height="9.2" fill="#ffffff" stroke="#444" stroke-width="1.0"/>
<path d="M889.2 536.2 L892.6 538.4 L900.6 534.2" fill="none" stroke="#444" stroke-width="1.1"/>
<ellipse cx="74.8" cy="549.95" rx="9.4" ry="4.7" fill="#e6122e"/><path d="M70.2 550.2 L73.4 552.0 L79.6 548.0" fill="none" stroke="#fff" stroke-width="1.3" stroke-linecap="round" stroke-linejoin="round"/>
<text transform="translate(120.4 553.0) scale(1.8 1)" font-family="'Liberation Sans','Noto Sans CJK SC',sans-serif" font-size="9.3" text-anchor="middle" fill="#1c1c1c" stroke="#1c1c1c" stroke-width="0.2">P1</text>
<text transform="translate(155.6 553.0) scale(1.99 1)" font-family="'Liberation Sans','Noto Sans CJK SC',sans-serif" font-size="8.4" text-anchor="start" fill="#1c1c1c" stroke="#1c1c1c" stroke-width="0.1">端盖内缘面到轴...</text>
<text transform="translate(345.4 553.0) scale(1.8 1)" font-family="'Liberation Sans','Noto Sans CJK SC',sans-serif" font-size="9.3" text-anchor="middle" fill="#1c1c1c" stroke="#1c1c1c" stroke-width="0.2">0</text>
<text transform="translate(443.0 553.0) scale(1.8 1)" font-family="'Liberation Sans','Noto Sans CJK SC',sans-serif" font-size="9.3" text-anchor="middle" fill="#1c1c1c" stroke="#1c1c1c" stroke-width="0.2">0</text>
<text transform="translate(540.8 553.0) scale(1.8 1)" font-family="'Liberation Sans','Noto Sans CJK SC',sans-serif" font-size="9.3" text-anchor="middle" fill="#1c1c1c" stroke="#1c1c1c" stroke-width="0.2">0</text>
<text transform="translate(639.3 553.0) scale(1.8 1)" font-family="'Liberation Sans','Noto Sans CJK SC',sans-serif" font-size="9.3" text-anchor="middle" fill="#1c1c1c" stroke="#1c1c1c" stroke-width="0.2">0</text>
<rect x="689.4" y="543.6" width="96.2" height="12.8" fill="#e1e1e1" stroke="#c4c4c4" stroke-width="0.8"/>
<rect x="787.4" y="543.6" width="96.2" height="12.8" fill="#e1e1e1" stroke="#c4c4c4" stroke-width="0.8"/>
<text x="693.6" y="552.8" font-family="'Liberation Serif','Noto Serif CJK SC',serif" font-size="8.0" fill="#444444" stroke="#444444" stroke-width="0.15" textLength="47.2" lengthAdjust="spacingAndGlyphs">组成环</text>
<text x="792.0" y="552.8" font-family="'Liberation Serif','Noto Serif CJK SC',serif" font-size="8.0" fill="#444444" stroke="#444444" stroke-width="0.15" textLength="31.8" lengthAdjust="spacingAndGlyphs">未知</text>
<path d="M774.5 549.1 H779.9 L777.2 551.4 Z" fill="#2a2a2a"/>
<path d="M873.0 549.1 H878.4 L875.7 551.4 Z" fill="#2a2a2a"/>
<rect x="885.8" y="545.4" width="17.6" height="9.2" fill="#ffffff" stroke="#444" stroke-width="1.0"/>
<ellipse cx="74.8" cy="563.73" rx="9.4" ry="4.7" fill="#e6122e"/><path d="M70.2 563.9 L73.4 565.7 L79.6 561.7" fill="none" stroke="#fff" stroke-width="1.3" stroke-linecap="round" stroke-linejoin="round"/>
<text transform="translate(120.4 566.7) scale(1.8 1)" font-family="'Liberation Sans','Noto Sans CJK SC',sans-serif" font-size="9.3" text-anchor="middle" fill="#1c1c1c" stroke="#1c1c1c" stroke-width="0.2">P2</text>
<text transform="translate(155.6 566.7) scale(1.99 1)" font-family="'Liberation Sans','Noto Sans CJK SC',sans-serif" font-size="8.4" text-anchor="start" fill="#1c1c1c" stroke="#1c1c1c" stroke-width="0.1">端盖内缘面到轴...</text>
<text transform="translate(345.4 566.7) scale(1.8 1)" font-family="'Liberation Sans','Noto Sans CJK SC',sans-serif" font-size="9.3" text-anchor="middle" fill="#1c1c1c" stroke="#1c1c1c" stroke-width="0.2">0</text>
<text transform="translate(443.0 566.7) scale(1.8 1)" font-family="'Liberation Sans','Noto Sans CJK SC',sans-serif" font-size="9.3" text-anchor="middle" fill="#1c1c1c" stroke="#1c1c1c" stroke-width="0.2">0</text>
<text transform="translate(540.8 566.7) scale(1.8 1)" font-family="'Liberation Sans','Noto Sans CJK SC',sans-serif" font-size="9.3" text-anchor="middle" fill="#1c1c1c" stroke="#1c1c1c" stroke-width="0.2">0</text>
<text transform="translate(639.3 566.7) scale(1.8 1)" font-family="'Liberation Sans','Noto Sans CJK SC',sans-serif" font-size="9.3" text-anchor="middle" fill="#1c1c1c" stroke="#1c1c1c" stroke-width="0.2">0</text>
<rect x="689.4" y="557.3" width="96.2" height="12.8" fill="#e1e1e1" stroke="#c4c4c4" stroke-width="0.8"/>
<rect x="787.4" y="557.3" width="96.2" height="12.8" fill="#e1e1e1" stroke="#c4c4c4" stroke-width="0.8"/>
<text x="693.6" y="566.5" font-family="'Liberation Serif','Noto Serif CJK SC',serif" font-size="8.0" fill="#444444" stroke="#444444" stroke-width="0.15" textLength="47.2" lengthAdjust="spacingAndGlyphs">组成环</text>
<text x="792.0" y="566.5" font-family="'Liberation Serif','Noto Serif CJK SC',serif" font-size="8.0" fill="#444444" stroke="#444444" stroke-width="0.15" textLength="31.8" lengthAdjust="spacingAndGlyphs">未知</text>
<path d="M774.5 562.8 H779.9 L777.2 565.1 Z" fill="#2a2a2a"/>
<path d="M873.0 562.8 H878.4 L875.7 565.1 Z" fill="#2a2a2a"/>
<rect x="885.8" y="559.1" width="17.6" height="9.2" fill="#ffffff" stroke="#444" stroke-width="1.0"/>
<ellipse cx="74.8" cy="577.51" rx="9.4" ry="4.7" fill="#16a857"/><path d="M70.2 577.7 L73.4 579.5 L79.6 575.5" fill="none" stroke="#fff" stroke-width="1.3" stroke-linecap="round" stroke-linejoin="round"/>
<text transform="translate(120.4 580.5) scale(1.8 1)" font-family="'Liberation Sans','Noto Sans CJK SC',sans-serif" font-size="9.3" text-anchor="middle" fill="#1c1c1c" stroke="#1c1c1c" stroke-width="0.2">M1</text>
<text transform="translate(221.0 580.5) scale(1.99 1)" font-family="'Liberation Sans','Noto Sans CJK SC',sans-serif" font-size="8.4" text-anchor="middle" fill="#1c1c1c" stroke="#1c1c1c" stroke-width="0.1">端盖止口垂直度</text>
<text transform="translate(345.4 580.5) scale(1.8 1)" font-family="'Liberation Sans','Noto Sans CJK SC',sans-serif" font-size="9.3" text-anchor="middle" fill="#1c1c1c" stroke="#1c1c1c" stroke-width="0.2">0</text>
<text transform="translate(443.0 580.5) scale(1.8 1)" font-family="'Liberation Sans','Noto Sans CJK SC',sans-serif" font-size="9.3" text-anchor="middle" fill="#1c1c1c" stroke="#1c1c1c" stroke-width="0.2">0.03</text>
<text transform="translate(540.8 580.5) scale(1.8 1)" font-family="'Liberation Sans','Noto Sans CJK SC',sans-serif" font-size="9.3" text-anchor="middle" fill="#1c1c1c" stroke="#1c1c1c" stroke-width="0.2">-0.03</text>
<text transform="translate(639.3 580.5) scale(1.8 1)" font-family="'Liberation Sans','Noto Sans CJK SC',sans-serif" font-size="9.3" text-anchor="middle" fill="#1c1c1c" stroke="#1c1c1c" stroke-width="0.2">0.06</text>
<rect x="689.4" y="571.1" width="96.2" height="12.8" fill="#e1e1e1" stroke="#c4c4c4" stroke-width="0.8"/>
<rect x="787.4" y="571.1" width="96.2" height="12.8" fill="#e1e1e1" stroke="#c4c4c4" stroke-width="0.8"/>
<text x="693.6" y="580.3" font-family="'Liberation Serif','Noto Serif CJK SC',serif" font-size="8.0" fill="#444444" stroke="#444444" stroke-width="0.15" textLength="47.2" lengthAdjust="spacingAndGlyphs">组成环</text>
<text x="792.0" y="580.3" font-family="'Liberation Serif','Noto Serif CJK SC',serif" font-size="8.0" fill="#444444" stroke="#444444" stroke-width="0.15" textLength="31.8" lengthAdjust="spacingAndGlyphs">已知</text>
<path d="M774.5 576.6 H779.9 L777.2 578.9 Z" fill="#2a2a2a"/>
<path d="M873.0 576.6 H878.4 L875.7 578.9 Z" fill="#2a2a2a"/>
<rect x="885.8" y="572.9" width="17.6" height="9.2" fill="#ffffff" stroke="#444" stroke-width="1.0"/>
<ellipse cx="74.8" cy="591.29" rx="9.4" ry="4.7" fill="#16a857"/><path d="M70.2 591.5 L73.4 593.3 L79.6 589.3" fill="none" stroke="#fff" stroke-width="1.3" stroke-linecap="round" stroke-linejoin="round"/>
<text transform="translate(120.4 594.3) scale(1.8 1)" font-family="'Liberation Sans','Noto Sans CJK SC',sans-serif" font-size="9.3" text-anchor="middle" fill="#1c1c1c" stroke="#1c1c1c" stroke-width="0.2">M2</text>
<text transform="translate(221.0 594.3) scale(1.99 1)" font-family="'Liberation Sans','Noto Sans CJK SC',sans-serif" font-size="8.4" text-anchor="middle" fill="#1c1c1c" stroke="#1c1c1c" stroke-width="0.1">壳体止口垂直度</text>
<text transform="translate(345.4 594.3) scale(1.8 1)" font-family="'Liberation Sans','Noto Sans CJK SC',sans-serif" font-size="9.3" text-anchor="middle" fill="#1c1c1c" stroke="#1c1c1c" stroke-width="0.2">0</text>
<text transform="translate(443.0 594.3) scale(1.8 1)" font-family="'Liberation Sans','Noto Sans CJK SC',sans-serif" font-size="9.3" text-anchor="middle" fill="#1c1c1c" stroke="#1c1c1c" stroke-width="0.2">0.03</text>
<text transform="translate(540.8 594.3) scale(1.8 1)" font-family="'Liberation Sans','Noto Sans CJK SC',sans-serif" font-size="9.3" text-anchor="middle" fill="#1c1c1c" stroke="#1c1c1c" stroke-width="0.2">-0.03</text>
<text transform="translate(639.3 594.3) scale(1.8 1)" font-family="'Liberation Sans','Noto Sans CJK SC',sans-serif" font-size="9.3" text-anchor="middle" fill="#1c1c1c" stroke="#1c1c1c" stroke-width="0.2">0.06</text>
<rect x="689.4" y="584.9" width="96.2" height="12.8" fill="#e1e1e1" stroke="#c4c4c4" stroke-width="0.8"/>
<rect x="787.4" y="584.9" width="96.2" height="12.8" fill="#e1e1e1" stroke="#c4c4c4" stroke-width="0.8"/>
<text x="693.6" y="594.1" font-family="'Liberation Serif','Noto Serif CJK SC',serif" font-size="8.0" fill="#444444" stroke="#444444" stroke-width="0.15" textLength="47.2" lengthAdjust="spacingAndGlyphs">组成环</text>
<text x="792.0" y="594.1" font-family="'Liberation Serif','Noto Serif CJK SC',serif" font-size="8.0" fill="#444444" stroke="#444444" stroke-width="0.15" textLength="31.8" lengthAdjust="spacingAndGlyphs">已知</text>
<path d="M774.5 590.4 H779.9 L777.2 592.7 Z" fill="#2a2a2a"/>
<path d="M873.0 590.4 H878.4 L875.7 592.7 Z" fill="#2a2a2a"/>
<rect x="885.8" y="586.7" width="17.6" height="9.2" fill="#ffffff" stroke="#444" stroke-width="1.0"/>
<ellipse cx="74.8" cy="605.07" rx="9.4" ry="4.7" fill="#16a857"/><path d="M70.2 605.3 L73.4 607.1 L79.6 603.1" fill="none" stroke="#fff" stroke-width="1.3" stroke-linecap="round" stroke-linejoin="round"/>
<text transform="translate(120.4 608.1) scale(1.8 1)" font-family="'Liberation Sans','Noto Sans CJK SC',sans-serif" font-size="9.3" text-anchor="middle" fill="#1c1c1c" stroke="#1c1c1c" stroke-width="0.2">A1</text>
<text transform="translate(345.4 608.1) scale(1.8 1)" font-family="'Liberation Sans','Noto Sans CJK SC',sans-serif" font-size="9.3" text-anchor="middle" fill="#1c1c1c" stroke="#1c1c1c" stroke-width="0.2">20</text>
<text transform="translate(443.0 608.1) scale(1.8 1)" font-family="'Liberation Sans','Noto Sans CJK SC',sans-serif" font-size="9.3" text-anchor="middle" fill="#1c1c1c" stroke="#1c1c1c" stroke-width="0.2">0.05</text>
<text transform="translate(540.8 608.1) scale(1.8 1)" font-family="'Liberation Sans','Noto Sans CJK SC',sans-serif" font-size="9.3" text-anchor="middle" fill="#1c1c1c" stroke="#1c1c1c" stroke-width="0.2">-0.05</text>
<text transform="translate(639.3 608.1) scale(1.8 1)" font-family="'Liberation Sans','Noto Sans CJK SC',sans-serif" font-size="9.3" text-anchor="middle" fill="#1c1c1c" stroke="#1c1c1c" stroke-width="0.2">0.1</text>
<rect x="689.4" y="598.7" width="96.2" height="12.8" fill="#e1e1e1" stroke="#c4c4c4" stroke-width="0.8"/>
<rect x="787.4" y="598.7" width="96.2" height="12.8" fill="#e1e1e1" stroke="#c4c4c4" stroke-width="0.8"/>
<text x="693.6" y="607.9" font-family="'Liberation Serif','Noto Serif CJK SC',serif" font-size="8.0" fill="#444444" stroke="#444444" stroke-width="0.15" textLength="47.2" lengthAdjust="spacingAndGlyphs">组成环</text>
<text x="792.0" y="607.9" font-family="'Liberation Serif','Noto Serif CJK SC',serif" font-size="8.0" fill="#444444" stroke="#444444" stroke-width="0.15" textLength="31.8" lengthAdjust="spacingAndGlyphs">已知</text>
<path d="M774.5 604.2 H779.9 L777.2 606.5 Z" fill="#2a2a2a"/>
<path d="M873.0 604.2 H878.4 L875.7 606.5 Z" fill="#2a2a2a"/>
<rect x="885.8" y="600.5" width="17.6" height="9.2" fill="#ffffff" stroke="#444" stroke-width="1.0"/>
<ellipse cx="74.8" cy="618.85" rx="9.4" ry="4.7" fill="#16a857"/><path d="M70.2 619.1 L73.4 620.9 L79.6 616.9" fill="none" stroke="#fff" stroke-width="1.3" stroke-linecap="round" stroke-linejoin="round"/>
<text transform="translate(120.4 621.9) scale(1.8 1)" font-family="'Liberation Sans','Noto Sans CJK SC',sans-serif" font-size="9.3" text-anchor="middle" fill="#1c1c1c" stroke="#1c1c1c" stroke-width="0.2">A2</text>
<text transform="translate(345.4 621.9) scale(1.8 1)" font-family="'Liberation Sans','Noto Sans CJK SC',sans-serif" font-size="9.3" text-anchor="middle" fill="#1c1c1c" stroke="#1c1c1c" stroke-width="0.2">3.5</text>
<text transform="translate(443.0 621.9) scale(1.8 1)" font-family="'Liberation Sans','Noto Sans CJK SC',sans-serif" font-size="9.3" text-anchor="middle" fill="#1c1c1c" stroke="#1c1c1c" stroke-width="0.2">0.01</text>
<text transform="translate(540.8 621.9) scale(1.8 1)" font-family="'Liberation Sans','Noto Sans CJK SC',sans-serif" font-size="9.3" text-anchor="middle" fill="#1c1c1c" stroke="#1c1c1c" stroke-width="0.2">-0.01</text>
<text transform="translate(639.3 621.9) scale(1.8 1)" font-family="'Liberation Sans','Noto Sans CJK SC',sans-serif" font-size="9.3" text-anchor="middle" fill="#1c1c1c" stroke="#1c1c1c" stroke-width="0.2">0.02</text>
<rect x="689.4" y="612.5" width="96.2" height="12.8" fill="#e1e1e1" stroke="#c4c4c4" stroke-width="0.8"/>
<rect x="787.4" y="612.5" width="96.2" height="12.8" fill="#e1e1e1" stroke="#c4c4c4" stroke-width="0.8"/>
<text x="693.6" y="621.6" font-family="'Liberation Serif','Noto Serif CJK SC',serif" font-size="8.0" fill="#444444" stroke="#444444" stroke-width="0.15" textLength="47.2" lengthAdjust="spacingAndGlyphs">组成环</text>
<text x="792.0" y="621.6" font-family="'Liberation Serif','Noto Serif CJK SC',serif" font-size="8.0" fill="#444444" stroke="#444444" stroke-width="0.15" textLength="31.8" lengthAdjust="spacingAndGlyphs">已知</text>
<path d="M774.5 618.0 H779.9 L777.2 620.2 Z" fill="#2a2a2a"/>
<path d="M873.0 618.0 H878.4 L875.7 620.2 Z" fill="#2a2a2a"/>
<rect x="885.8" y="614.2" width="17.6" height="9.2" fill="#ffffff" stroke="#444" stroke-width="1.0"/>
<ellipse cx="74.8" cy="632.63" rx="9.4" ry="4.7" fill="#16a857"/><path d="M70.2 632.8 L73.4 634.6 L79.6 630.6" fill="none" stroke="#fff" stroke-width="1.3" stroke-linecap="round" stroke-linejoin="round"/>
<text transform="translate(120.4 635.6) scale(1.8 1)" font-family="'Liberation Sans','Noto Sans CJK SC',sans-serif" font-size="9.3" text-anchor="middle" fill="#1c1c1c" stroke="#1c1c1c" stroke-width="0.2">A3</text>
<text transform="translate(345.4 635.6) scale(1.8 1)" font-family="'Liberation Sans','Noto Sans CJK SC',sans-serif" font-size="9.3" text-anchor="middle" fill="#1c1c1c" stroke="#1c1c1c" stroke-width="0.2">10</text>
<text transform="translate(443.0 635.6) scale(1.8 1)" font-family="'Liberation Sans','Noto Sans CJK SC',sans-serif" font-size="9.3" text-anchor="middle" fill="#1c1c1c" stroke="#1c1c1c" stroke-width="0.2">0.03</text>
<text transform="translate(540.8 635.6) scale(1.8 1)" font-family="'Liberation Sans','Noto Sans CJK SC',sans-serif" font-size="9.3" text-anchor="middle" fill="#1c1c1c" stroke="#1c1c1c" stroke-width="0.2">-0.03</text>
<text transform="translate(639.3 635.6) scale(1.8 1)" font-family="'Liberation Sans','Noto Sans CJK SC',sans-serif" font-size="9.3" text-anchor="middle" fill="#1c1c1c" stroke="#1c1c1c" stroke-width="0.2">0.06</text>
<rect x="689.4" y="626.2" width="96.2" height="12.8" fill="#e1e1e1" stroke="#c4c4c4" stroke-width="0.8"/>
<rect x="787.4" y="626.2" width="96.2" height="12.8" fill="#e1e1e1" stroke="#c4c4c4" stroke-width="0.8"/>
<text x="693.6" y="635.4" font-family="'Liberation Serif','Noto Serif CJK SC',serif" font-size="8.0" fill="#444444" stroke="#444444" stroke-width="0.15" textLength="47.2" lengthAdjust="spacingAndGlyphs">组成环</text>
<text x="792.0" y="635.4" font-family="'Liberation Serif','Noto Serif CJK SC',serif" font-size="8.0" fill="#444444" stroke="#444444" stroke-width="0.15" textLength="31.8" lengthAdjust="spacingAndGlyphs">已知</text>
<path d="M774.5 631.7 H779.9 L777.2 634.0 Z" fill="#2a2a2a"/>
<path d="M873.0 631.7 H878.4 L875.7 634.0 Z" fill="#2a2a2a"/>
<rect x="885.8" y="628.0" width="17.6" height="9.2" fill="#ffffff" stroke="#444" stroke-width="1.0"/>
<ellipse cx="74.8" cy="646.4100000000001" rx="9.4" ry="4.7" fill="#16a857"/><path d="M70.2 646.6 L73.4 648.4 L79.6 644.4" fill="none" stroke="#fff" stroke-width="1.3" stroke-linecap="round" stroke-linejoin="round"/>
<text transform="translate(120.4 649.4) scale(1.8 1)" font-family="'Liberation Sans','Noto Sans CJK SC',sans-serif" font-size="9.3" text-anchor="middle" fill="#1c1c1c" stroke="#1c1c1c" stroke-width="0.2">A4</text>
<text transform="translate(345.4 649.4) scale(1.8 1)" font-family="'Liberation Sans','Noto Sans CJK SC',sans-serif" font-size="9.3" text-anchor="middle" fill="#1c1c1c" stroke="#1c1c1c" stroke-width="0.2">10.5</text>
<text transform="translate(443.0 649.4) scale(1.8 1)" font-family="'Liberation Sans','Noto Sans CJK SC',sans-serif" font-size="9.3" text-anchor="middle" fill="#1c1c1c" stroke="#1c1c1c" stroke-width="0.2">0.03</text>
<text transform="translate(540.8 649.4) scale(1.8 1)" font-family="'Liberation Sans','Noto Sans CJK SC',sans-serif" font-size="9.3" text-anchor="middle" fill="#1c1c1c" stroke="#1c1c1c" stroke-width="0.2">-0.02</text>
<text transform="translate(639.3 649.4) scale(1.8 1)" font-family="'Liberation Sans','Noto Sans CJK SC',sans-serif" font-size="9.3" text-anchor="middle" fill="#1c1c1c" stroke="#1c1c1c" stroke-width="0.2">0.05</text>
<rect x="689.4" y="640.0" width="96.2" height="12.8" fill="#e1e1e1" stroke="#c4c4c4" stroke-width="0.8"/>
<rect x="787.4" y="640.0" width="96.2" height="12.8" fill="#e1e1e1" stroke="#c4c4c4" stroke-width="0.8"/>
<text x="693.6" y="649.2" font-family="'Liberation Serif','Noto Serif CJK SC',serif" font-size="8.0" fill="#444444" stroke="#444444" stroke-width="0.15" textLength="47.2" lengthAdjust="spacingAndGlyphs">组成环</text>
<text x="792.0" y="649.2" font-family="'Liberation Serif','Noto Serif CJK SC',serif" font-size="8.0" fill="#444444" stroke="#444444" stroke-width="0.15" textLength="31.8" lengthAdjust="spacingAndGlyphs">已知</text>
<path d="M774.5 645.5 H779.9 L777.2 647.8 Z" fill="#2a2a2a"/>
<path d="M873.0 645.5 H878.4 L875.7 647.8 Z" fill="#2a2a2a"/>
<rect x="885.8" y="641.8" width="17.6" height="9.2" fill="#ffffff" stroke="#444" stroke-width="1.0"/>
<ellipse cx="75.7" cy="660.4" rx="8" ry="3.9" fill="#e6122e"/><rect x="74.6" y="657.6" width="2.2" height="3.2" fill="#fff"/><rect x="74.6" y="661.6" width="2.2" height="1.4" fill="#fff"/>
<text transform="translate(120.4 663.2) scale(1.8 1)" font-family="'Liberation Sans','Noto Sans CJK SC',sans-serif" font-size="9.3" text-anchor="middle" fill="#0b6872" stroke="#0b6872" stroke-width="0.2">H</text>
<text transform="translate(155.6 663.2) scale(1.99 1)" font-family="'Liberation Sans','Noto Sans CJK SC',sans-serif" font-size="8.4" text-anchor="start" fill="#0b6872" stroke="#0b6872" stroke-width="0.1">壳体与端盖止口...</text>
<text transform="translate(345.4 663.2) scale(1.8 1)" font-family="'Liberation Sans','Noto Sans CJK SC',sans-serif" font-size="9.3" text-anchor="middle" fill="#0b6872" stroke="#0b6872" stroke-width="0.2">0</text>
<text transform="translate(443.0 663.2) scale(1.8 1)" font-family="'Liberation Sans','Noto Sans CJK SC',sans-serif" font-size="9.3" text-anchor="middle" fill="#0b6872" stroke="#0b6872" stroke-width="0.2">0</text>
<text transform="translate(540.8 663.2) scale(1.8 1)" font-family="'Liberation Sans','Noto Sans CJK SC',sans-serif" font-size="9.3" text-anchor="middle" fill="#0b6872" stroke="#0b6872" stroke-width="0.2">0</text>
<text transform="translate(639.3 663.2) scale(1.8 1)" font-family="'Liberation Sans','Noto Sans CJK SC',sans-serif" font-size="9.3" text-anchor="middle" fill="#0b6872" stroke="#0b6872" stroke-width="0.2">0</text>
<rect x="689.4" y="653.8" width="96.2" height="12.8" fill="#e1e1e1" stroke="#c4c4c4" stroke-width="0.8"/>
<rect x="787.4" y="653.8" width="96.2" height="12.8" fill="#e1e1e1" stroke="#c4c4c4" stroke-width="0.8"/>
<text x="693.6" y="663.0" font-family="'Liberation Serif','Noto Serif CJK SC',serif" font-size="8.0" fill="#444444" stroke="#444444" stroke-width="0.15" textLength="47.2" lengthAdjust="spacingAndGlyphs">封闭环</text>
<text x="792.0" y="663.0" font-family="'Liberation Serif','Noto Serif CJK SC',serif" font-size="8.0" fill="#444444" stroke="#444444" stroke-width="0.15" textLength="31.8" lengthAdjust="spacingAndGlyphs">求解</text>
<path d="M774.5 659.3 H779.9 L777.2 661.6 Z" fill="#2a2a2a"/>
<path d="M873.0 659.3 H878.4 L875.7 661.6 Z" fill="#2a2a2a"/>
<rect x="885.8" y="655.6" width="17.6" height="9.2" fill="#ffffff" stroke="#444" stroke-width="1.0"/>
<text x="61.3" y="684.4" font-family="'Liberation Serif','Noto Serif CJK SC',serif" font-size="8.0" fill="#5a5a5a" stroke="#5a5a5a" stroke-width="0.15" textLength="93.1" lengthAdjust="spacingAndGlyphs">已选中:0/16,</text>
<text x="166.9" y="684.4" font-family="'Liberation Serif','Noto Serif CJK SC',serif" font-size="8.0" fill="#5a5a5a" stroke="#5a5a5a" stroke-width="0.15" textLength="87.5" lengthAdjust="spacingAndGlyphs">求解值:0/1,</text>
<text x="266.9" y="684.4" font-family="'Liberation Serif','Noto Serif CJK SC',serif" font-size="8.0" fill="#5a5a5a" stroke="#5a5a5a" stroke-width="0.15" textLength="64.9" lengthAdjust="spacingAndGlyphs">未知:0/7</text>
<rect x="753.6" y="674.2" width="100.0" height="13.6" fill="#e4e4e4" stroke="#0a78d6" stroke-width="1.6"/>
<rect x="864.6" y="674.0" width="100.0" height="13.8" fill="#e1e1e1" stroke="#adadad" stroke-width="1.0"/>
<text x="789.0" y="684.2" font-family="'Liberation Serif','Noto Serif CJK SC',serif" font-size="8.0" fill="#444444" stroke="#444444" stroke-width="0.15" textLength="31.0" lengthAdjust="spacingAndGlyphs">确定</text>
<text x="899.0" y="684.2" font-family="'Liberation Serif','Noto Serif CJK SC',serif" font-size="8.0" fill="#444444" stroke="#444444" stroke-width="0.15" textLength="31.0" lengthAdjust="spacingAndGlyphs">取消</text>
</g>
<g transform="translate(763.5,642.5) scale(0.93)" fill="#fbfbfb" stroke="rgba(90,90,90,.55)" stroke-width="0.9">
<path d="M13.2 0 C5.9 0 0 4.9 0 11 C0 14.5 1.9 17.5 4.9 19.6 L3.4 24.4 L8.6 21.5 C10 21.9 11.6 22.1 13.2 22.1 C20.5 22.1 26.4 17.2 26.4 11 C26.4 4.9 20.5 0 13.2 0 Z"/>
<path d="M26 9.7 C19.5 9.7 14.2 14.1 14.2 19.6 C14.2 25.1 19.5 29.5 26 29.5 C27.4 29.5 28.7 29.3 29.9 28.9 L34.4 31.6 L33.2 27.4 C36 25.6 37.8 22.8 37.8 19.6 C37.8 14.1 32.5 9.7 26 9.7 Z"/>
<g fill="#9a9a9a" stroke="none"><circle cx="8.8" cy="7.6" r="1.4"/><circle cx="17.6" cy="7.6" r="1.4"/><circle cx="22" cy="16.4" r="1.2"/><circle cx="30" cy="16.4" r="1.2"/></g>
</g>
<g font-family="'Liberation Sans','Noto Sans CJK SC',sans-serif" font-size="22.5"><text x="805.3" y="666.3" fill="rgba(50,50,50,.7)" textLength="143.6" lengthAdjust="spacingAndGlyphs">DTAS棣拓软件</text><text x="804" y="665.0" fill="#ffffff" stroke="rgba(100,100,100,.5)" stroke-width="0.5" textLength="143.6" lengthAdjust="spacingAndGlyphs">DTAS棣拓软件</text></g>
</svg>
</body></html>
